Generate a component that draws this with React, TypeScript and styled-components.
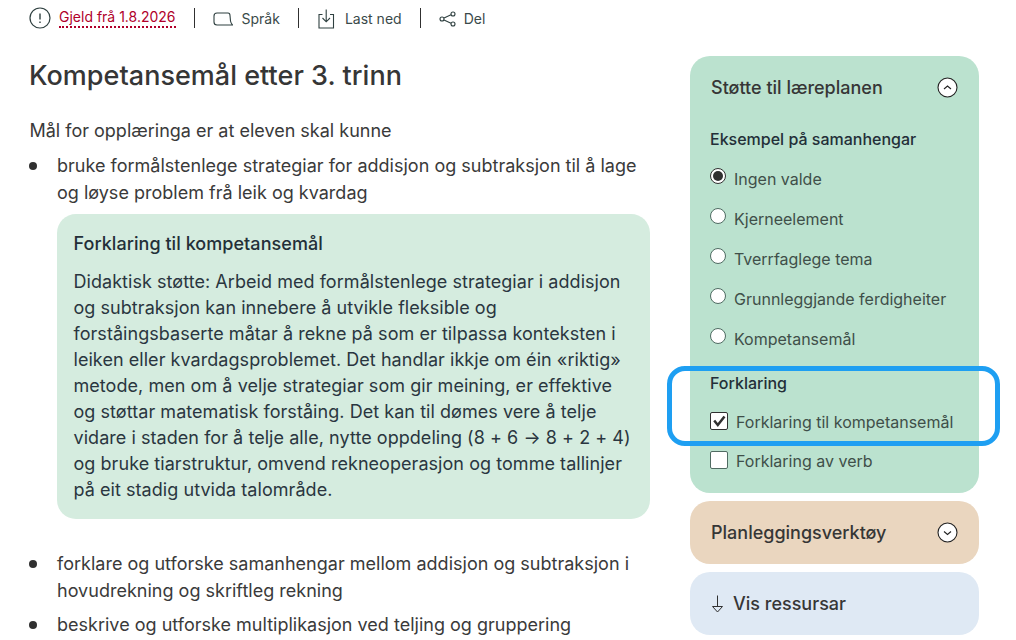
import React from "react";
import styled, { createGlobalStyle } from "styled-components";

const Global = createGlobalStyle`
  html, body { margin: 0; padding: 0; background: #fff; }
  body { font-family: Inter, "Noto Sans", sans-serif; color: #303030; overflow: hidden; }
  * { box-sizing: border-box; }
`;

const Page = styled.div`
  position: relative;
  width: 1016px;
  height: 640px;
  overflow: hidden;
  display: grid;
  grid-template-columns: 650px 289px;
  column-gap: 40px;
  align-content: start;
`;

const Main = styled.main`
  padding-left: 30px;
  min-width: 0;
`;

const Toolbar = styled.div`
  display: flex;
  align-items: center;
  height: 20px;
  margin-top: 8px;
  font-size: 14px;
  color: #3a4a4a;
`;

const ToolItem = styled.span`
  display: inline-flex;
  align-items: center;
  gap: ${p => p.$gap ?? 9}px;
  line-height: 20px;
  padding-top: 2px;
`;

const Divider = styled.span`
  width: 1px;
  height: 20px;
  background: #303030;
  margin: 0 ${p => p.$r ?? 18}px 0 ${p => p.$l ?? 18}px;
`;

const Validity = styled.span`
  color: #b0002a;
  font-size: 14px;
  line-height: 18px;
  margin-top: -1px;
  border-bottom: 2px dotted #b0002a;
`;

const Title = styled.h1`
  margin: 30px 0 0 -1px;
  font-size: 27px;
  font-weight: 500;
  line-height: 36px;
  letter-spacing: 0.02px;
  color: #363636;
`;

const Lead = styled.p`
  margin: 24px 0 0 -0.5px;
  font-size: 18px;
  line-height: 26px;
  color: #3a3a3a;
`;

const GoalList = styled.ul`
  margin: 8px 0 0;
  padding: 0;
  list-style: none;
  font-size: 18px;
  line-height: 27px;
  letter-spacing: 0.01px;
  color: #3a3a3a;
`;

const Goal = styled.li`
  position: relative;
  padding-left: 27px;
  margin-bottom: ${p => p.$mb ?? 7}px;
  &::before {
    content: "";
    position: absolute;
    left: -1px;
    top: 10px;
    width: 8px;
    height: 8px;
    border-radius: 50%;
    background: #303030;
  }
`;

const Explain = styled.section`
  margin: 8px 0 31px;
  padding: 17px 16px 16px 16.5px;
  background: #d5ecdf;
  border-radius: 19px;
  min-height: 305px;
  letter-spacing: 0.05px;
`;

const ExplainTitle = styled.h3`
  margin: 0 0 12px;
  font-size: 18px;
  font-weight: 500;
  line-height: 26px;
  color: #232f38;
`;

const ExplainText = styled.p`
  margin: 0;
  font-size: 18px;
  line-height: 26px;
  color: #2a3640;
`;

const Aside = styled.aside`
  display: flex;
  flex-direction: column;
  gap: 8px;
  padding-top: 56px;
`;

const Card = styled.div`
  background: ${p => p.$bg};
  border-radius: 20px;
`;

const CardHead = styled.div`
  display: flex;
  align-items: center;
  justify-content: space-between;
  height: 63px;
  padding: 0 21px;
  font-size: 18px;
  font-weight: 500;
  color: #363636;
`;

const CardBody = styled.div`
  padding: 8px 20px 20px;
`;

const GroupTitle = styled.div`
  font-size: 16px;
  font-weight: 500;
  line-height: 24px;
  color: #232f38;
  margin-top: ${p => p.$mt ?? 0}px;
  margin-bottom: ${p => p.$mb ?? 0}px;
`;

const Radio = styled.div`
  display: flex;
  align-items: flex-start;
  height: 40px;
  padding-top: 8px;
  font-size: 16px;
  line-height: 24px;
  color: #3f4f49;
`;

const RadioDot = styled.span`
  width: 16px;
  height: 16px;
  margin-right: 8px;
  margin-top: 1px;
  border-radius: 50%;
  background: #fff;
  border: 1px solid #4f6b62;
  flex: none;
  position: relative;
  ${p => p.$on && `
    border: 1px solid #303030;
    &::after {
      content: "";
      position: absolute;
      inset: 2px;
      border-radius: 50%;
      background: #303030;
    }
  `}
`;

const Check = styled.div`
  display: flex;
  align-items: center;
  height: 24px;
  margin-top: ${p => p.$mt ?? 0}px;
  font-size: 16px;
  color: #3f4f49;
`;

const Box = styled.span`
  width: 18px;
  height: 18px;
  margin-right: 8px;
  margin-top: -3px;
  flex: none;
  background: #fff;
  border: 1px solid ${p => (p.$on ? "#303030" : "#4f6b62")};
  border-radius: 2px;
  display: flex;
  align-items: center;
  justify-content: center;
`;

const SolidTitle = styled.div`
  display: flex;
  align-items: center;
  gap: 9px;
  height: 63px;
  padding-left: 21px;
  font-size: 18px;
  font-weight: 500;
  color: #363636;
`;

const Highlight = styled.div`
  position: absolute;
  left: 667px;
  top: 366px;
  width: 333px;
  height: 80px;
  border: 5px solid #1e9ff2;
  border-radius: 18px;
  pointer-events: none;
`;

const Ico = ({ w, h, children }: { w: number; h: number; children: React.ReactNode }) => (
  <svg width={w} height={h} viewBox={`0 0 ${w} ${h}`} fill="none" stroke="#2f4040" strokeWidth="1.1" style={{ flex: "none" }}>
    {children}
  </svg>
);

const Chevron = ({ up }: { up?: boolean }) => (
  <svg width="21" height="21" viewBox="0 0 21 21" fill="none" style={{ flex: "none" }}>
    <circle cx="10.5" cy="10.5" r="9.5" fill="#fff" stroke="#222" strokeWidth="1.1" />
    <path d={up ? "M7 12 L10.5 9 L14 12" : "M7 9.5 L10.5 12.5 L14 9.5"} stroke="#222" strokeWidth="1.1" />
  </svg>
);

export default function App() {
  return (
    <Page>
      <Global />
      <Main>
        <Toolbar>
          <svg width="22" height="22" viewBox="0 0 22 22" fill="none" style={{ flex: "none", marginRight: 8, marginLeft: -1 }}>
            <circle cx="11" cy="11" r="10" stroke="#2f4040" strokeWidth="1.2" />
            <path d="M11 6.5 V12.5 M11 14.5 V16" stroke="#2f4040" strokeWidth="1.4" />
          </svg>
          <Validity>Gjeld frå 1.8.2026</Validity>
          <Divider $l={18} $r={18} />
          <ToolItem $gap={9}>
            <Ico w={20} h={14}>
              <path d="M4 1 H15 Q17 1 17 3.5 L17.5 9 Q18 11.5 19.5 13 H4 Q1 13 1 10 V4 Q1 1 4 1 Z" />
            </Ico>
            Språk
          </ToolItem>
          <Divider $l={18} $r={19} />
          <ToolItem $gap={10}>
            <Ico w={17} h={20}>
              <path d="M4.5 5.5 H1 V19 H15.5 V5.5 H12 M8.2 0.5 V12.5 M4.5 9 L8.2 12.8 L12 9" />
            </Ico>
            Last ned
          </ToolItem>
          <Divider $l={18} $r={18} />
          <ToolItem $gap={8}>
            <Ico w={17} h={16}>
              <circle cx="14" cy="3" r="2" />
              <circle cx="14" cy="13" r="2" />
              <circle cx="3" cy="8" r="2" />
              <path d="M5 7 L12 3.8 M5 9 L12 12.2" />
            </Ico>
            Del
          </ToolItem>
        </Toolbar>
        <Title>Kompetansemål etter 3. trinn</Title>
        <Lead>Mål for opplæringa er at eleven skal kunne</Lead>
        <GoalList>
          <Goal $mb={0}>
            bruke formålstenlege strategiar for addisjon og subtraksjon til å lage og løyse problem frå leik og kvardag
            <Explain>
              <ExplainTitle>Forklaring til kompetansemål</ExplainTitle>
              <ExplainText>
                Didaktisk støtte: Arbeid med formålstenlege strategiar i addisjon og subtraksjon kan innebere å utvikle fleksible og forståingsbaserte måtar å rekne på som er tilpassa konteksten i leiken eller kvardagsproblemet. Det handlar ikkje om éin «riktig» metode, men om å velje strategiar som gir meining, er effektive og støttar matematisk forståing. Det kan til dømes vere å telje vidare i staden for å telje alle, nytte oppdeling (8 + 6 → 8 + 2 + 4) og bruke tiarstruktur, omvend rekneoperasjon og tomme tallinjer på eit stadig utvida talområde.
              </ExplainText>
            </Explain>
          </Goal>
          <Goal>forklare og utforske samanhengar mellom addisjon og subtraksjon i hovudrekning og skriftleg rekning</Goal>
          <Goal>beskrive og utforske multiplikasjon ved teljing og gruppering</Goal>
        </GoalList>
      </Main>
      <Aside>
        <Card $bg="#bbe2cf">
          <CardHead>
            Støtte til læreplanen
            <Chevron up />
          </CardHead>
          <CardBody>
            <GroupTitle $mb={8}>Eksempel på samanhengar</GroupTitle>
            <Radio><RadioDot $on />Ingen valde</Radio>
            <Radio><RadioDot />Kjerneelement</Radio>
            <Radio><RadioDot />Tverrfaglege tema</Radio>
            <Radio><RadioDot />Grunnleggjande ferdigheiter</Radio>
            <Radio><RadioDot />Kompetansemål</Radio>
            <GroupTitle $mt={12}>Forklaring</GroupTitle>
            <Check $mt={15}>
              <Box $on>
                <svg width="16" height="16" viewBox="0 0 16 16" fill="none">
                  <path d="M3.2 7.5 L6.8 12 L13.5 3.5" stroke="#303030" strokeWidth="2.5" />
                </svg>
              </Box>
              Forklaring til kompetansemål
            </Check>
            <Check $mt={15}><Box />Forklaring av verb</Check>
          </CardBody>
        </Card>
        <Card $bg="#ead6bf">
          <CardHead>
            Planleggingsverktøy
            <Chevron />
          </CardHead>
        </Card>
        <Card $bg="#dfe9f4">
          <SolidTitle>
            <svg width="13" height="18" viewBox="0 0 13 18" fill="none" style={{ flex: "none" }}>
              <path d="M6.5 0.5 V11 M1.5 11.5 H11.5 L6.5 17 Z" stroke="#303030" strokeWidth="1" />
            </svg>
            Vis ressursar
          </SolidTitle>
        </Card>
      </Aside>
      <Highlight />
    </Page>
  );
}
